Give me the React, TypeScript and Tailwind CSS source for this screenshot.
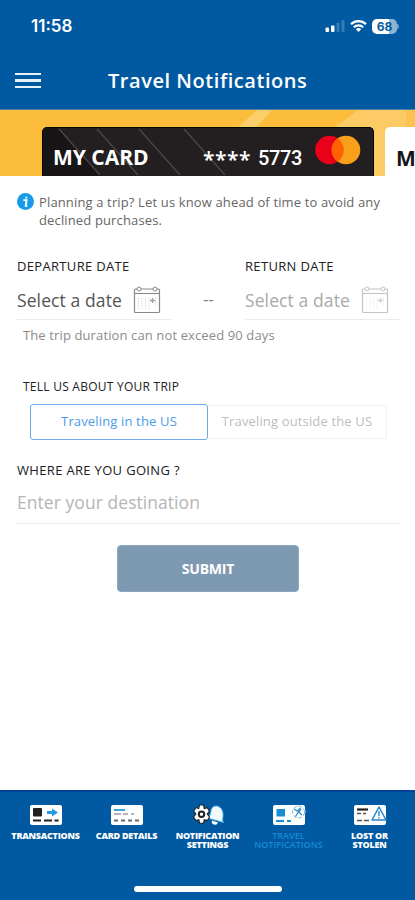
import React from 'react';

const CalendarIcon: React.FC<{ className?: string }> = ({ className = '' }) => (
  <svg width="28" height="30" viewBox="0 0 28 30" fill="none" stroke="currentColor" className={className}>
    <rect x="1.5" y="4" width="25" height="23.5" rx="1" strokeWidth="1.2" />
    <path d="M1.5 8.5h25" strokeWidth="1.1" />
    <circle cx="6" cy="4" r="2" fill="white" strokeWidth="1" />
    <circle cx="22" cy="4" r="2" fill="white" strokeWidth="1" />
    <path d="M5.5 13v11M9 13v11M12.500 13v11M16 13v11" strokeWidth="0.8" strokeDasharray="1.500 1" opacity="0.4" />
    <path d="M19.500 13v5M17 15.500h5" strokeWidth="1.3" opacity="0.8" />
    <path d="M22.500 12v9" strokeWidth="0.8" strokeDasharray="1.500 1" opacity="0.35" />
  </svg>
);

const StatusBar: React.FC = () => (
  <div className="flex h-[52px] items-center justify-between pl-[31px] pr-[16px] text-white">
    <span className="font-['Inter',sans-serif] text-[17px] font-semibold leading-none">11:58</span>
    <div className="flex items-center">
      <svg width="20" height="14" viewBox="0 0 20 14" fill="white" className="mr-[5px]">
        <rect x="0.500" y="8.500" width="3.500" height="4.500" rx="1" />
        <rect x="6" y="6.500" width="3.500" height="6.500" rx="1" />
        <rect x="11.500" y="3.500" width="3" height="9.500" rx="1" opacity="0.2" />
        <rect x="16.500" y="1" width="3" height="12" rx="1" opacity="0.2" />
      </svg>
      <svg width="17" height="14" viewBox="0 0 17 14" fill="none" stroke="white" className="mr-[5px]">
        <path d="M1 5.200a10.800 10.800 0 0 1 15 0" strokeWidth="2.300" />
        <path d="M3.800 8.300a6.700 6.700 0 0 1 9.400 0" strokeWidth="2.200" />
        <path d="M8.500 13L5.800 10.200a4 4 0 0 1 5.400 0z" fill="white" stroke="none" />
      </svg>
      <div className="flex h-[15px] w-[25px] items-center justify-center rounded-[5px] bg-[linear-gradient(90deg,#fff_68%,#8db4d5_68%)] font-['Inter',sans-serif] text-[12px] font-bold leading-[15px] text-[#015aa1]">
        68
      </div>
      <div className="h-[5px] w-[2px] rounded-r-full bg-[#6b9fc8]"></div>
    </div>
  </div>
);

const Header: React.FC = () => (
  <header className="h-[110px] border-b border-[#4f7f9c] bg-[#015aa1]">
    <StatusBar />
    <div className="flex h-[57px] items-center pl-[15px]">
      <div className="flex w-[26px] flex-col gap-[4px]">
        <div className="h-[2.500px] bg-[#e8f0fa]"></div>
        <div className="h-[2.500px] bg-[#e8f0fa]"></div>
        <div className="h-[2.500px] bg-[#e8f0fa]"></div>
      </div>
      <h1 className="ml-[67px] whitespace-nowrap text-[20px] font-semibold tracking-[0.55px] text-white">
        Travel Notifications
      </h1>
    </div>
  </header>
);

const CardCarousel: React.FC = () => (
  <div className="relative h-[66px] overflow-hidden bg-[#fbbd3b]">
    <svg width="415" height="66" className="absolute inset-0">
      <path d="M257 0h15l-16 18h-19z" fill="#fcce6c" />
      <path d="M358 0h48v66h-72v-48z" fill="#fccb66" />
      <path d="M406 0h9v66h-9z" fill="#fbc250" />
    </svg>
    <div className="relative flex gap-[11px] pl-[42px] pt-[17px]">
      <div className="relative h-[49px] w-[332px] shrink-0 overflow-hidden rounded-t-[5px] border border-b-0 border-black bg-[#231f20]">
        <svg width="332" height="49" className="absolute inset-0" fill="none">
          <path d="M0 0h14l46 49H0z" fill="#171516" />
          <path d="M16 1l41 46M54 1l41 46M96 1l41 46M141 1l41 46" stroke="#4d4848" strokeWidth="1.200" />
        </svg>
        <div className="relative flex h-full items-center pl-[10px] pr-[12px] pt-[12px] text-white">
          <span className="w-[150px] whitespace-nowrap text-[21px] font-bold">MY CARD</span>
          <span className="w-[55px] whitespace-nowrap pt-[2px] text-[21px] font-semibold leading-[28px] tracking-[0.5px]">
            ****
          </span>
          <span className="whitespace-nowrap font-['Roboto',sans-serif] text-[20px] font-medium tracking-[-0.4px]">
            5773
          </span>
          <svg width="46" height="30" viewBox="0 0 46 30" className="-mt-[16px] ml-auto">
            <circle cx="14.500" cy="15" r="14.300" fill="#eb001b" />
            <circle cx="31" cy="15" r="14.300" fill="#f9a01b" />
            <path d="M22.750 3.300a14.300 14.300 0 0 1 0 23.400a14.300 14.300 0 0 1 0-23.400z" fill="#ff6200" />
          </svg>
        </div>
      </div>
      <div className="h-[49px] w-[332px] shrink-0 rounded-tl-[5px] bg-white pl-[11px] pt-[17px] text-[21px] font-bold leading-[28px] text-[#151515]">
        MY CARD
      </div>
    </div>
  </div>
);

const DateField: React.FC<{ label: string; disabled?: boolean }> = ({ label, disabled }) => (
  <div className="flex flex-col">
    <span className="whitespace-nowrap text-[13px] font-medium leading-[18px] tracking-[0.33px] text-[#202020]">{label}</span>
    <div className="mt-[8px] flex h-[37px] items-center border-b border-[#ececec] pb-[3px]">
      <span className={`w-[116px] whitespace-nowrap text-[17.5px] leading-[24px] tracking-[0.1px] ${disabled ? 'text-[#a9a9a9]' : 'text-[#555]'}`}>
        Select a date
      </span>
      <CalendarIcon className={disabled ? 'text-[#c4c4c4]' : 'text-[#8a8a8a]'} />
    </div>
  </div>
);

const CardBase: React.FC<{ children: React.ReactNode }> = ({ children }) => (
  <svg width="34" height="24" viewBox="0 0 34 24" fill="none">
    <rect x="1" y="2" width="32" height="20" rx="2" fill="white" />
    {children}
  </svg>
);

const TransactionsIcon = () => (
  <CardBase>
    <rect x="4" y="5" width="9" height="8.500" rx="1" fill="#202020" />
    <path d="M4 17.500h8M15 17.500h8M25.500 17.500h4" stroke="#202020" strokeWidth="1.800" />
    <path d="M18 9.500h6" stroke="#239be0" strokeWidth="3" />
    <path d="M23 5.500l6 4-6 4z" fill="#239be0" />
  </CardBase>
);

const DetailsIcon = () => (
  <CardBase>
    <path d="M4 7h11" stroke="#3ba5dd" strokeWidth="2" />
    <path d="M4 11h7M13 11h5M21 11h3" stroke="#b5b5b5" strokeWidth="2" />
    <path d="M4 17.500h4M11 17.500h4M18 17.500h4M25 17.500h4" stroke="#6b6b6b" strokeWidth="2" />
  </CardBase>
);

const SettingsIcon = () => (
  <svg width="34" height="24" viewBox="0 0 34 24" fill="none">
    <path d="M26 3c-4-.5-6 2.500-6.200 6-.2 3-1.800 4.500-3.500 6l16.200 4.500c-1.200-2-.8-3.500-.5-5.500.7-5-1.200-10-6-11z" fill="#f0faff" stroke="#39aae8" strokeWidth="0.900" />
    <path d="M21 17.500a3 3 0 0 0 6 2z" fill="white" />
    <path d="M8.500 2h4l.8 3.500 3-.9 2.200 3.500-2.300 2.900 2.300 3-2.100 3.500-3.100-.8-.8 3.500h-3.900l-.8-3.500-3 .8-2.200-3.500 2.300-3-2.300-2.900 2.300-3.500 2.800.9z" fill="white" stroke="#202020" strokeWidth="1.100" />
    <circle cx="10.500" cy="11.200" r="2.700" fill="white" stroke="#202020" strokeWidth="2" />
  </svg>
);

const TravelIcon = () => (
  <CardBase>
    <rect x="4.500" y="6" width="8.500" height="7.500" fill="#168ed1" />
    <path d="M4 18h8M15 18h4" stroke="#168ed1" strokeWidth="1.800" />
    <circle cx="27" cy="8.500" r="6.500" fill="white" />
    <circle cx="26.500" cy="9" r="6" stroke="#7dbbe2" strokeWidth="1" strokeDasharray="4 1.500" />
    <path d="M22 6l3.500 2L28.500 5M23.500 13.500l3-4.500 3.500 3M29 6.500L26.500 9" stroke="#2b8bca" strokeWidth="1.200" />
  </CardBase>
);

const LostIcon = () => (
  <CardBase>
    <path d="M4 6.500h11" stroke="#202020" strokeWidth="2.200" />
    <path d="M4 10.500h4M10 10.500h3M4 17.500h5M11 17.500h5" stroke="#555" strokeWidth="1.700" />
    <path d="M26 4l7 13H19z" fill="white" stroke="#2585c6" strokeWidth="1.500" strokeLinejoin="round" />
    <path d="M26 8v5M26 14v1.500" stroke="#2585c6" strokeWidth="1.400" />
  </CardBase>
);

const navItems = [
  { lines: ['TRANSACTIONS'], icon: <TransactionsIcon /> },
  { lines: ['CARD DETAILS'], icon: <DetailsIcon /> },
  { lines: ['NOTIFICATION', 'SETTINGS'], icon: <SettingsIcon /> },
  { lines: ['TRAVEL', 'NOTIFICATIONS'], icon: <TravelIcon />, active: true },
  { lines: ['LOST OR', 'STOLEN'], icon: <LostIcon /> },
];

const BottomNav: React.FC = () => (
  <nav className="flex h-[110px] flex-col border-t-2 border-[#034299] bg-[#015aa1]">
    <div className="grid h-[94px] grid-cols-5 px-[5px] pt-[11px]">
      {navItems.map((item) => (
        <div key={item.lines.join(' ')} className="flex flex-col items-center">
          {item.icon}
          <span className={`mt-[4px] flex flex-col whitespace-nowrap text-center text-[9px] leading-[9px] ${item.active ? 'font-semibold tracking-[0.050px] text-[#168bd0]' : 'font-extrabold tracking-[-0.25px] text-white'}`}>
            {item.lines.map((line) => (
              <span key={line}>{line}</span>
            ))}
          </span>
        </div>
      ))}
    </div>
    <div className="mx-auto h-[6px] w-[148px] rounded-full bg-white"></div>
  </nav>
);

export default function App() {
  return (
    <div className="flex h-[900px] w-full flex-col overflow-hidden bg-white font-['Open_Sans',sans-serif]">
      <Header />
      <CardCarousel />
      <main className="flex flex-1 flex-col">
        <div className="flex h-[81px] gap-[6px] pl-[17px] pt-[17px]">
          <svg width="17" height="17" viewBox="0 0 16 16" className="-mr-px shrink-0">
            <circle cx="8" cy="8" r="8" fill="#159be8" />
            <path d="M6 6.700h3L8.200 12h1.500M8.800 3.500v1.600" fill="none" stroke="white" strokeWidth="1.800" />
          </svg>
          <p className="whitespace-nowrap text-[13px] leading-[18px] tracking-[0.14px] text-[#666]">
            Planning a trip? Let us know ahead of time to avoid any
            <br />
            declined purchases.
          </p>
        </div>

        <div className="grid h-[63px] grid-cols-[155px_73px_155px] pl-[17px]">
          <DateField label="DEPARTURE DATE" />
          <span className="pt-[30px] text-center text-[16px] leading-[24px] text-[#777]">--</span>
          <DateField label="RETURN DATE" disabled />
        </div>
        <p className="h-[58px] whitespace-nowrap pl-[23px] pt-[6px] text-[13px] leading-[18px] tracking-[0.12px] text-[#8c8c8c]">
          The trip duration can not exceed 90 days
        </p>

        <p className="h-[26px] whitespace-nowrap pl-[23px] text-[12px] font-medium leading-[18px] tracking-[0.25px] text-[#222]">
          TELL US ABOUT YOUR TRIP
        </p>
        <div className="flex h-[36px] pl-[30px]">
          <button className="h-[36px] w-[178px] whitespace-nowrap rounded-[3px] border border-[#6daae9] text-[13px] tracking-[0.15px] text-[#4a9ce8]">
            Traveling in the US
          </button>
          <button className="mt-[1px] h-[34px] w-[179px] whitespace-nowrap rounded-[2px] border border-l-0 border-[#f0f0f0] text-[13px] tracking-[0.15px] text-[#bdbdbd]">
            Traveling outside the US
          </button>
        </div>

        <p className="mt-[21px] whitespace-nowrap pl-[17px] text-[13px] font-medium leading-[18px] tracking-[0.33px] text-[#202020]">
          WHERE ARE YOU GOING ?
        </p>
        <div className="ml-[16px] mt-[9px] h-[36px] w-[384px] whitespace-nowrap border-b border-[#ececec] pl-px text-[17.5px] leading-[28px] tracking-[0.05px] text-[#b5b5b5]">
          Enter your destination
        </div>
        <button className="ml-[117px] mt-[21px] h-[47px] w-[182px] rounded-[4px] border border-[#8ca6bd] bg-[#7e99b2] text-[14px] font-bold tracking-[-0.2px] text-white">
          SUBMIT
        </button>
      </main>
      <BottomNav />
    </div>
  );
}
